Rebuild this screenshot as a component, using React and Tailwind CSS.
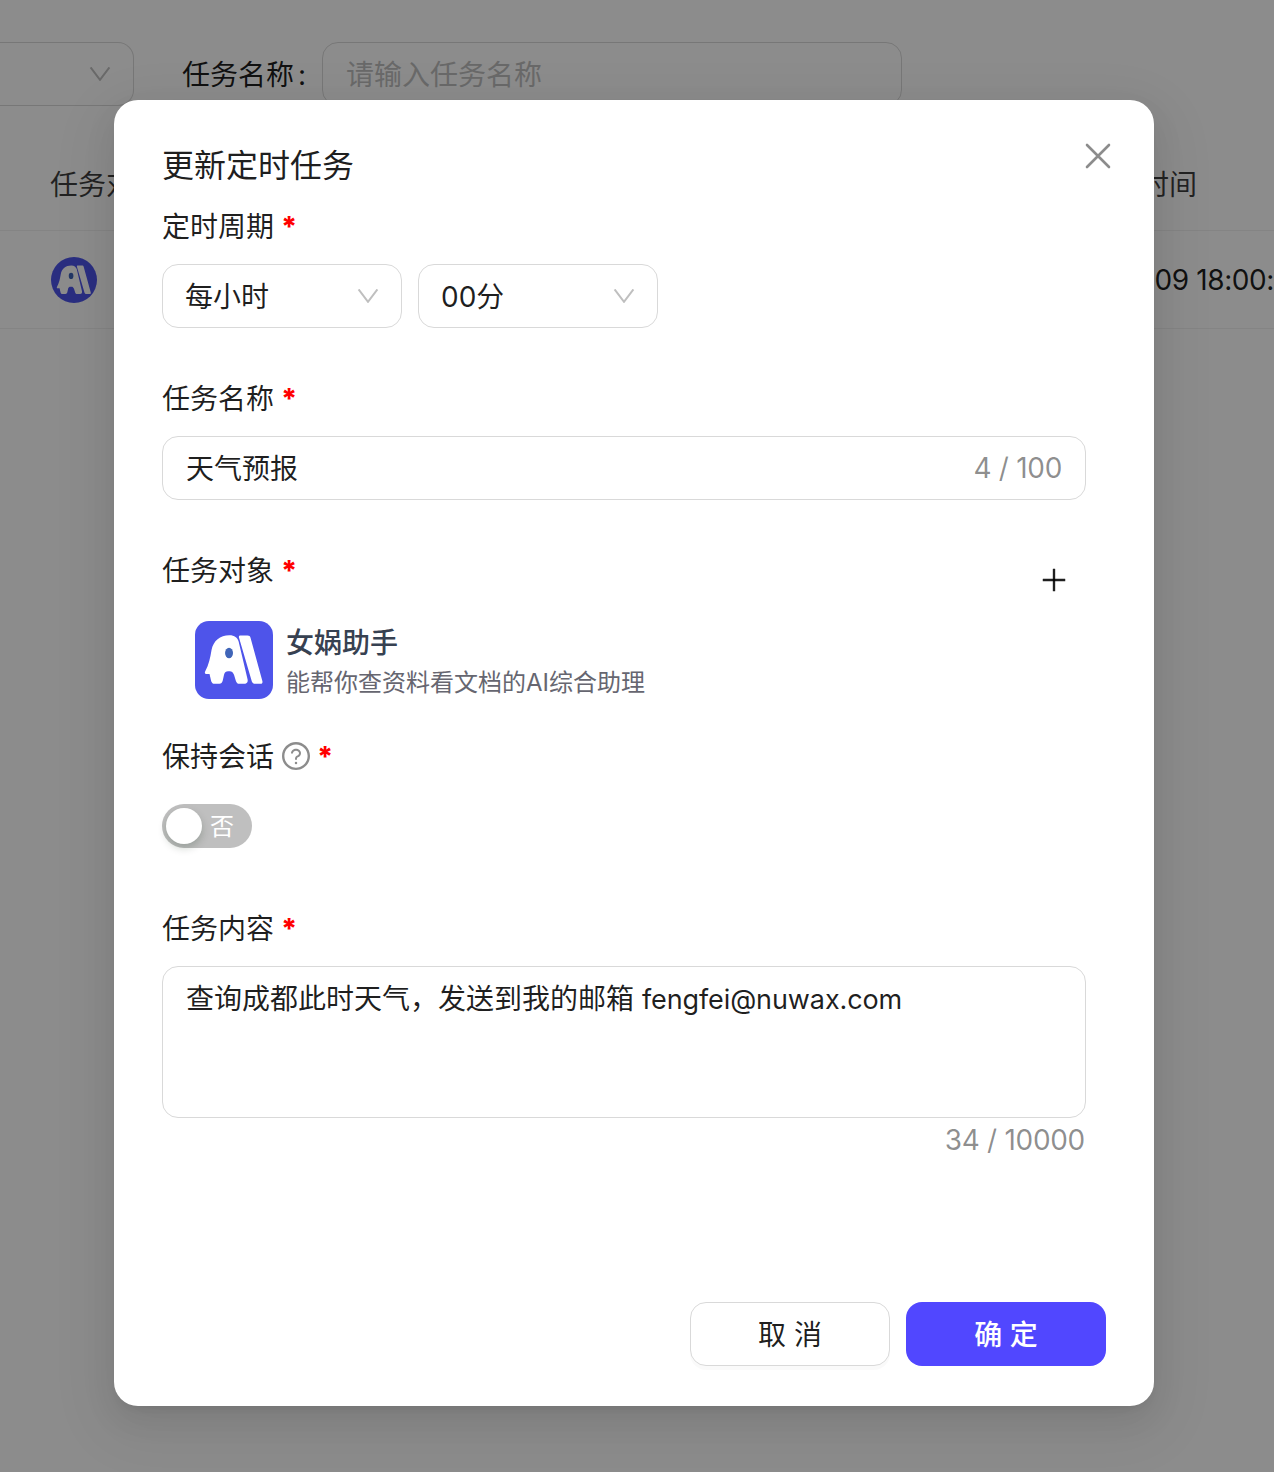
import React, { useState } from "react";
import { AiOutlinePlus, AiOutlineQuestionCircle } from "react-icons/ai";

const Logo = ({ className }) => (
  <svg viewBox="0 0 236 236" className={className}>
    <rect width="236" height="236" fill="#4e54ea" />
    <path
      d="M31 152 C42 132 46 112 50 88 C55 60 76 43 104 43 C120 43 128 50 132 62 L159 176 C161 184 157 190 149 190 L134 190 C129 190 126 187 124 182 L118 163 C115 155 111 152 105 152 L100 152 C94 152 90 155 88 162 L84 180 C82 187 79 190 74 190 L59 190 C54 190 51 187 49 182 L44 160 L34 160 C29 160 29 156 31 152 Z"
      fill="#fff"
    />
    <path
      d="M133 50 C132 46 134 44 138 44 L159 44 C164 44 167 46 168 51 L204 182 C205 187 203 190 198 190 L182 190 C177 190 174 188 172 183 Z"
      fill="#fff"
    />
    <ellipse cx="103" cy="97" rx="12" ry="16" fill="#4065b8" />
  </svg>
);

const ChevronDown = () => (
  <svg width="22" height="14" viewBox="0 0 22 14" fill="none">
    <path d="M1.6 0.4 L11 12.8 L20.4 0.4" stroke="#bfbfbf" strokeWidth="2" />
  </svg>
);

const Label = ({ text, children }) => (
  <div className="flex h-11 items-center">
    <span className="pt-0.5">{text}</span>
    {children}
    <span className="ml-[7px] pt-px font-extrabold text-[#ff0000]">*</span>
  </div>
);

const Select = ({ value }) => (
  <div className="flex h-16 w-60 items-center justify-between rounded-2xl border border-[#d9d9d9] px-[22px]">
    <span className="pt-0.5">{value}</span>
    <ChevronDown />
  </div>
);

const TaskPage = () => (
  <div className="h-full overflow-hidden">
    <div className="flex h-[148px] items-start pt-[42px]">
      <div className="flex h-16 w-[134px] items-center justify-end rounded-r-2xl border border-l-0 border-[#d9d9d9] pr-[22px]">
        <ChevronDown />
      </div>
      <div className="ml-12 flex h-16 w-[140px] items-center pt-0.5">
        任务名称<span className="ml-1">:</span>
      </div>
      <div className="flex h-16 w-[580px] items-center rounded-2xl border border-[#d9d9d9] px-[23px] pt-0.5 text-[#bfbfbf]">
        请输入任务名称
      </div>
    </div>
    <div className="flex h-[83px] items-center justify-between border-b border-[#f0f0f0] pr-[77px] pb-[9px] pl-[50px] text-black/75">
      <span>任务对象</span>
      <span>创建时间</span>
    </div>
    <div className="flex h-[98px] items-center justify-between border-b border-[#f0f0f0] pl-[51px]">
      <Logo className="size-[46px] rounded-full" />
      <span className="whitespace-nowrap tracking-[-0.4px]">2025-09-09 18:00:</span>
    </div>
  </div>
);

export default function App() {
  const [name] = useState("天气预报");

  return (
    <div className="relative h-[1472px] w-[1274px] overflow-hidden bg-white font-[Inter,'Noto_Sans_CJK_SC',sans-serif] text-[28px] leading-[44px] text-black/88">
      <TaskPage />

      {/* Modal */}
      <div className="absolute inset-0 flex items-start justify-center bg-black/45 pt-[100px] pr-[6px]">
        <div className="flex h-[1306px] w-[1040px] flex-col rounded-3xl bg-white px-12 pt-10 pb-10 shadow-[0_12px_32px_0_rgba(0,0,0,0.08),0_6px_12px_-8px_rgba(0,0,0,0.12),0_18px_56px_16px_rgba(0,0,0,0.05)]">
          <div className="flex h-12 items-start justify-between">
            <h2 className="pt-0.5 text-[32px] leading-[48px]">更新定时任务</h2>
            <svg width="28" height="28" viewBox="0 0 28 28" className="mt-0.5 -mr-1.5">
              <path
                d="M3 3 L25 25 M25 3 L3 25"
                stroke="#8c8c8c"
                strokeWidth="2.6"
                strokeLinecap="round"
              />
            </svg>
          </div>

          <div className="mt-4 flex w-[924px] flex-col">
            <Label text="定时周期" />
            <div className="mt-4 flex gap-4">
              <Select value="每小时" />
              <Select value="00分" />
            </div>

            <div className="mt-12">
              <Label text="任务名称" />
            </div>
            <div className="mt-4 flex h-16 items-center justify-between rounded-2xl border border-[#d9d9d9] px-[23px]">
              <span className="pt-0.5">{name}</span>
              <span className="tracking-[-0.3px] text-black/45">{name.length} / 100</span>
            </div>

            <div className="mt-12 flex h-16 items-start justify-between pr-4">
              <Label text="任务对象" />
              <AiOutlinePlus size={32} className="mt-4" />
            </div>
            <div className="mt-2 flex h-20 items-center pl-[33px]">
              <Logo className="size-[78px] rounded-[14px]" />
              <div className="ml-[13px] pt-0.5">
                <p className="leading-[44px] font-medium text-[#374151]">女娲助手</p>
                <p className="text-2xl leading-9 text-[#666670]">能帮你查资料看文档的AI综合助理</p>
              </div>
            </div>

            <div className="mt-[34px]">
              <Label text="保持会话">
                <AiOutlineQuestionCircle size={32} className="ml-1.5 -mr-0.5 text-black/45" />
              </Label>
            </div>
            <div className="mt-4 flex h-16 items-center">
              <div className="flex h-11 w-[90px] items-center rounded-full bg-[#bfbfbf] pl-1">
                <span className="size-9 rounded-full bg-white shadow-[0_4px_8px_0_rgba(0,35,11,0.2)]" />
                <span className="ml-2 pt-0.5 text-2xl text-white">否</span>
              </div>
            </div>

            <div className="mt-12">
              <Label text="任务内容" />
            </div>
            <div className="mt-4 h-[152px] rounded-2xl border border-[#d9d9d9] px-[23px] py-[10px]">
              查询成都此时天气，发送到我的邮箱{" "}
              <span className="text-[27px] tracking-[-0.1px]">fengfei@nuwax.com</span>
            </div>
            <p className="pr-px text-right tracking-[-0.3px] text-black/45">34 / 10000</p>
          </div>

          <div className="mt-auto flex justify-end gap-4">
            <button className="h-16 w-[200px] rounded-2xl border border-[#d9d9d9] bg-white pt-0.5 shadow-[0_4px_0_rgba(0,0,0,0.02)]">
              取 消
            </button>
            <button className="h-16 w-[200px] rounded-2xl bg-[#5147ff] pt-0.5 font-medium text-white">
              确 定
            </button>
          </div>
        </div>
      </div>
    </div>
  );
}
